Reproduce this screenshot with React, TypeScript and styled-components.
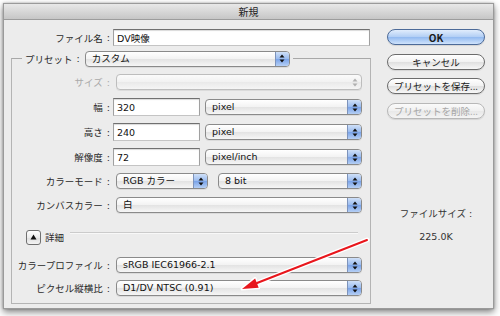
import React from 'react';
import styled, { createGlobalStyle } from 'styled-components';

const Global = createGlobalStyle`
  html, body { margin: 0; padding: 0; background: #ffffff; }
  body {
    width: 500px; height: 316px; overflow: hidden;
    font-family: "DejaVu Sans", "Noto Sans CJK JP", sans-serif;
    font-size: 9.5px; color: #262626;
  }
  * { box-sizing: border-box; }
`;

const Stage = styled.div`
  position: relative;
  width: 500px;
  height: 316px;
  padding: 3px 0 0 3px;
`;

const Window = styled.div`
  width: 491px;
  height: 306px;
  background: #ececec;
  border: 1px solid #9a9a9a;
  box-shadow: 0 3px 7px rgba(0, 0, 0, 0.5), 0 0 2px rgba(0, 0, 0, 0.25);
  display: flex;
  flex-direction: column;
`;

const TitleBar = styled.div`
  flex: none;
  height: 16px;
  background: linear-gradient(#e8e8e8, #c6c6c6);
  border-bottom: 1px solid #9c9c9c;
  display: flex;
  align-items: center;
  justify-content: center;
  font-family: "Noto Sans CJK JP", sans-serif;
  font-size: 10px;
  color: #222;
`;

const Body = styled.div`
  flex: 1;
  display: flex;
  padding: 9px 0 0 7px;
`;

const LeftCol = styled.div`
  width: 360px;
  display: flex;
  flex-direction: column;
`;

const RightCol = styled.div`
  width: 98px;
  margin-left: 16px;
  display: flex;
  flex-direction: column;
`;

const FileRow = styled.div`
  display: flex;
  align-items: center;
  height: 17px;
`;

const Label = styled.div<{ $w?: number; $disabled?: boolean }>`
  width: ${(p) => (p.$w ? `${p.$w}px` : 'auto')};
  flex: none;
  display: flex;
  justify-content: flex-end;
  align-items: center;
  white-space: nowrap;
  color: ${(p) => (p.$disabled ? '#a9a9a9' : '#2a2a2a')};
  font-family: "Noto Sans CJK JP", sans-serif;
`;

const Colon = styled.span`
  margin-left: 4px;
  font-family: "DejaVu Sans", sans-serif;
`;

const TextField = styled.div<{ $w: number; $h?: number; $ml?: number }>`
  width: ${(p) => p.$w}px;
  height: ${(p) => p.$h ?? 18}px;
  margin-left: ${(p) => p.$ml ?? 3}px;
  background: #fff;
  border: 1px solid #a0a0a0;
  border-top-color: #707070;
  border-bottom-color: #c4c4c4;
  box-shadow: inset 0 1px 1px rgba(0, 0, 0, 0.15);
  padding-left: 3px;
  display: flex;
  align-items: center;
  white-space: nowrap;
  color: #111;
`;

const Group = styled.fieldset`
  margin: 4px 0 0 0;
  padding: 0 0 6px 0;
  border: 1px solid #b4b4b4;
  border-top-color: #a8a8a8;
  min-width: 0;
  width: 360px;
`;

const Legend = styled.legend`
  margin-left: 10px;
  padding: 0 3px;
  height: 17px;
  display: flex;
  align-items: center;
`;

const Row = styled.div<{ $mt: number }>`
  display: flex;
  align-items: center;
  height: 18px;
  margin-top: ${(p) => p.$mt}px;
`;

const PopupBox = styled.div<{ $w: number; $ml?: number; $disabled?: boolean }>`
  width: ${(p) => p.$w}px;
  height: 16px;
  margin-left: ${(p) => p.$ml ?? 6}px;
  flex: none;
  display: flex;
  border: 1px solid ${(p) => (p.$disabled ? '#bdbdbd' : '#8a8a8a')};
  border-radius: 4px;
  overflow: hidden;
  background: ${(p) =>
    p.$disabled
      ? 'linear-gradient(#fbfbfb, #f1f1f1 50%, #e9e9e9 51%, #f5f5f5)'
      : 'linear-gradient(#ffffff, #f3f3f3 48%, #e3e3e3 52%, #f6f6f6)'};
  box-shadow: 0 1px 0 rgba(0, 0, 0, 0.07);
`;

const PopupText = styled.span`
  flex: 1;
  padding-left: 6px;
  line-height: 14px;
  white-space: nowrap;
  overflow: hidden;
  color: #111;
`;

const PopupArrows = styled.span<{ $disabled?: boolean }>`
  flex: none;
  width: 14px;
  display: flex;
  align-items: center;
  justify-content: center;
  border-left: 1px solid ${(p) => (p.$disabled ? 'transparent' : '#7d93bb')};
  background: ${(p) =>
    p.$disabled
      ? 'transparent'
      : 'linear-gradient(#cfe0f8, #9bbcef 48%, #7aa3e8 52%, #b5cff5)'};
`;

const PushButton = styled.div<{ $mt: number; $default?: boolean; $disabled?: boolean }>`
  height: 16px;
  margin-top: ${(p) => p.$mt}px;
  border-radius: 8px;
  border: 1px solid
    ${(p) => (p.$disabled ? '#b8b8b8' : p.$default ? '#4c6a98' : '#6c6c6c')};
  background: ${(p) =>
    p.$default
      ? 'linear-gradient(#e1edfc, #b3cff5 48%, #93baf0 52%, #cfe3fc)'
      : p.$disabled
      ? 'linear-gradient(#fafafa, #f0f0f0 50%, #e8e8e8 51%, #f4f4f4)'
      : 'linear-gradient(#ffffff, #f2f2f2 48%, #e0e0e0 52%, #f7f7f7)'};
  box-shadow: 0 1px 1px rgba(0, 0, 0, 0.1);
  display: flex;
  align-items: center;
  justify-content: center;
  font-family: "Noto Sans CJK JP", sans-serif;
  font-weight: ${(p) => (p.$default ? 700 : 400)};
  font-size: ${(p) => (p.$default ? '10px' : '9.5px')};
  color: ${(p) => (p.$disabled ? '#a6a6a6' : '#1a1a1a')};
  white-space: nowrap;
`;

const InfoText = styled.div<{ $mt: number }>`
  margin-top: ${(p) => p.$mt}px;
  text-align: center;
  font-family: "DejaVu Sans", "Noto Sans CJK JP", sans-serif;
  color: #333;
  line-height: 12px;
`;

const Disclosure = styled.div`
  width: 15px;
  height: 15px;
  margin-left: 14px;
  flex: none;
  border: 1px solid #707070;
  border-radius: 3px;
  background: linear-gradient(#ffffff, #ececec 50%, #dedede 51%, #f4f4f4);
  display: flex;
  align-items: center;
  justify-content: center;
`;

const DetailText = styled.span`
  margin-left: 4px;
  font-family: "Noto Sans CJK JP", sans-serif;
  color: #2a2a2a;
`;

const Separator = styled.div`
  flex: 1;
  height: 2px;
  margin: -8px 12px 0 6px;
  border-top: 1px solid #cbcbcb;
  border-bottom: 1px solid #f8f8f8;
`;

const Overlay = styled.svg`
  position: absolute;
  left: 0;
  top: 0;
  pointer-events: none;
`;

const Arrows: React.FC<{ disabled?: boolean }> = ({ disabled }) => (
  <svg width="6" height="9" viewBox="0 0 6 9">
    <polygon points="3,0.5 5.5,3.5 0.5,3.5" fill={disabled ? '#b0b0b0' : '#111'} />
    <polygon points="0.5,5.5 5.5,5.5 3,8.5" fill={disabled ? '#b0b0b0' : '#111'} />
  </svg>
);

const Popup: React.FC<{ w: number; ml?: number; text?: string; disabled?: boolean }> = ({
  w,
  ml,
  text,
  disabled,
}) => (
  <PopupBox $w={w} $ml={ml} $disabled={disabled}>
    <PopupText>{text}</PopupText>
    <PopupArrows $disabled={disabled}>
      <Arrows disabled={disabled} />
    </PopupArrows>
  </PopupBox>
);

const FieldLabel: React.FC<{ text: string; disabled?: boolean; w?: number }> = ({
  text,
  disabled,
  w = 98,
}) => (
  <Label $w={w} $disabled={disabled}>
    {text}
    <Colon>:</Colon>
  </Label>
);

export default function App() {
  return (
    <Stage>
      <Global />
      <Window>
        <TitleBar>新規</TitleBar>
        <Body>
          <LeftCol>
            <FileRow>
              <FieldLabel text="ファイル名" w={99} />
              <TextField $w={257} $h={17}>DV映像</TextField>
            </FileRow>
            <Group>
              <Legend>
                <Label>
                  プリセット
                  <Colon>:</Colon>
                </Label>
                <Popup w={205} ml={5} text="カスタム" />
              </Legend>
              <Row $mt={6}>
                <FieldLabel text="サイズ" disabled />
                <Popup w={246} disabled />
              </Row>
              <Row $mt={7}>
                <FieldLabel text="幅" />
                <TextField $w={87}>320</TextField>
                <Popup w={157} ml={5} text="pixel" />
              </Row>
              <Row $mt={7}>
                <FieldLabel text="高さ" />
                <TextField $w={87}>240</TextField>
                <Popup w={157} ml={5} text="pixel" />
              </Row>
              <Row $mt={7}>
                <FieldLabel text="解像度" />
                <TextField $w={87}>72</TextField>
                <Popup w={157} ml={5} text="pixel/inch" />
              </Row>
              <Row $mt={6}>
                <FieldLabel text="カラーモード" />
                <Popup w={92} text="RGB カラー" />
                <Popup w={144} ml={10} text="8 bit" />
              </Row>
              <Row $mt={6}>
                <FieldLabel text="カンバスカラー" />
                <Popup w={246} text="白" />
              </Row>
              <Row $mt={14}>
                <Disclosure>
                  <svg width="7" height="6" viewBox="0 0 7 6">
                    <polygon points="3.5,0.5 6.5,5.5 0.5,5.5" fill="#111" />
                  </svg>
                </Disclosure>
                <DetailText>詳細</DetailText>
                <Separator />
              </Row>
              <Row $mt={10}>
                <FieldLabel text="カラープロファイル" />
                <Popup w={246} text="sRGB IEC61966-2.1" />
              </Row>
              <Row $mt={5}>
                <FieldLabel text="ピクセル縦横比" />
                <Popup w={246} text="D1/DV NTSC (0.91)" />
              </Row>
            </Group>
          </LeftCol>
          <RightCol>
            <PushButton $mt={0} $default>OK</PushButton>
            <PushButton $mt={9}>キャンセル</PushButton>
            <PushButton $mt={8}>プリセットを保存...</PushButton>
            <PushButton $mt={9} $disabled>プリセットを削除...</PushButton>
            <InfoText $mt={89}>ファイルサイズ :</InfoText>
            <InfoText $mt={11}>225.0K</InfoText>
          </RightCol>
        </Body>
      </Window>
      <Overlay width="500" height="316" viewBox="0 0 500 316">
        <g strokeLinecap="round" strokeLinejoin="round">
          <line x1="367" y1="240" x2="257" y2="283" stroke="#ffffff" strokeWidth="5" />
          <polygon points="242,289 258.7,287.8 255.1,278.5" fill="#ffffff" stroke="#ffffff" strokeWidth="3" />
          <line x1="367" y1="240" x2="257" y2="283" stroke="#e8161c" strokeWidth="2" />
          <polygon points="242,289 258.7,287.8 255.1,278.5" fill="#e8161c" />
        </g>
      </Overlay>
    </Stage>
  );
}
